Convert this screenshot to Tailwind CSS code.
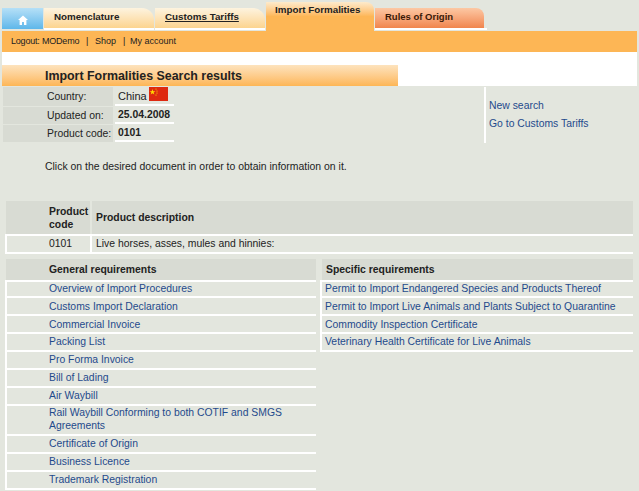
<!DOCTYPE html>
<html lang="en">
<head>
    <meta charset="UTF-8">
    <title>Import Formalities Search results</title>
    <script src="https://cdn.jsdelivr.net/npm/@tailwindcss/browser@4"></script>
</head>
<body class="bg-[#e3e6de] font-['Liberation_Sans',Arial,sans-serif] text-[10.4px] text-[#222] h-[491px] w-[639px] overflow-hidden">
    <!-- tabs -->
    <div class="flex items-end h-[31px] pl-[2px] gap-[1px]">
        <div class="w-[41px] h-[21px] mb-[2px] flex items-center justify-center bg-gradient-to-b from-[#b5e0f7] to-[#5db7ea]">
            <svg width="10" height="10" viewBox="0 0 10 10" class="mt-[2px]"><path d="M5 0.5 L10 5 H8.4 V10 H6 V7 H4 V10 H1.6 V5 H0 Z" fill="#fff"/></svg>
        </div>
        <div class="w-[110px] h-[22px] mb-[1px] pl-[10px] pt-[2px] text-[9.8px] font-bold bg-gradient-to-b from-[#fdf3df] to-[#fcd48f] rounded-tr-[12px] border-b-2 border-white">Nomenclature</div>
        <div class="w-[110px] h-[22px] mb-[1px] pl-[10px] pt-[2px] text-[9.8px] font-bold underline bg-gradient-to-b from-[#fdf3df] to-[#fcd48f] rounded-tr-[12px] border-b-2 border-white">Customs Tariffs</div>
        <div class="w-[108px] h-[29px] pl-[9px] pt-[1px] text-[9.8px] font-bold bg-gradient-to-b from-[#fdeacb] to-[#fdb655] to-50% rounded-tr-[8px]">Import Formalities</div>
        <div class="w-[112px] h-[22px] mb-[1px] border-b-2 border-white">
            <div class="w-[109px] h-full pl-[10px] pt-[2px] text-[9.5px] font-bold text-[#3a1a08] bg-gradient-to-b from-[#fcc8a4] to-[#f0844c] rounded-tr-[8px]">Rules of Origin</div>
        </div>
    </div>
    <div class="ml-[2px] w-[635px] h-[21px] bg-[#fdb655] flex items-center pl-[9px] text-[9px]">
        <span class="w-[75px] tracking-[-0.2px]">Logout: MODemo</span><span class="w-[9px]">|</span><span class="w-[28px]">Shop</span><span class="w-[7px]">|</span><span>My account</span>
    </div>
    <!-- title band -->
    <div class="ml-[2px] w-[635px] h-[34px] bg-white pt-[13px]">
        <div class="w-[396px] h-[21px] pl-[43px] pt-[1px] flex items-center font-bold text-[12.4px] bg-gradient-to-b from-[#fde3bd] to-[#fdb655]">Import Formalities Search results</div>
    </div>
    <!-- info -->
    <div class="flex h-[56px] mt-[1px] ml-[3px]">
        <div class="w-[481px] flex flex-col">
            <div class="flex h-[19px]">
                <div class="w-[110px] bg-[#d8dbd3] pl-[44px] flex items-center">Country:</div>
                <div class="w-[59px] ml-[2px] pl-[3px] pt-[2px] flex items-center gap-[2px] border-b-2 border-white text-[11px]">China
                    <svg width="19" height="14" viewBox="0 0 19 14" class="-mt-[5px]"><rect width="19" height="14" fill="#de2910"/><path d="M3.5 2 L4.2 4.2 L6.4 4.2 L4.6 5.5 L5.3 7.6 L3.5 6.3 L1.7 7.6 L2.4 5.5 L0.6 4.2 L2.8 4.2 Z" fill="#ffde00"/><circle cx="7" cy="2" r=".6" fill="#ffde00"/><circle cx="8" cy="4" r=".6" fill="#ffde00"/><circle cx="8" cy="6" r=".6" fill="#ffde00"/><circle cx="7" cy="8" r=".6" fill="#ffde00"/></svg>
                </div>
            </div>
            <div class="flex h-[18px]">
                <div class="w-[110px] bg-[#d8dbd3] border-t border-[#e3e6de] pl-[44px] flex items-center">Updated on:</div>
                <div class="w-[59px] ml-[2px] pl-[3px] pt-[2px] flex items-center font-bold border-b-2 border-white">25.04.2008</div>
            </div>
            <div class="flex h-[18px]">
                <div class="w-[110px] bg-[#d8dbd3] border-t border-[#e3e6de] pl-[44px] flex items-center">Product code:</div>
                <div class="w-[59px] ml-[2px] pl-[3px] pt-[2px] flex items-center font-bold border-b-2 border-white">0101</div>
            </div>
        </div>
        <div class="border-l-2 border-white pl-[3px] pt-[10px] text-[#1f4a8c] leading-[18px]">
            <div>New search</div>
            <div>Go to Customs Tariffs</div>
        </div>
    </div>
    <p class="ml-[45px] mt-[17px] h-[13px] leading-[13px] text-[10.45px]">Click on the desired document in order to obtain information on it.</p>
    <!-- product table -->
    <div class="ml-[5px] mt-[28px] w-[628px]">
        <div class="flex h-[33px] ml-[1px] bg-[#d8dbd3] font-bold">
            <div class="w-[86px] pl-[43px] flex items-center leading-[13px] border-r-2 border-[#e3e6de]">Product code</div>
            <div class="pl-[4px] flex items-center">Product description</div>
        </div>
        <div class="flex h-[20px] border-y-2 border-white border-l-2">
            <div class="w-[85px] pl-[42px] flex items-center border-r-2 border-white">0101</div>
            <div class="pl-[4px] flex items-center">Live horses, asses, mules and hinnies:</div>
        </div>
    </div>
    <!-- requirements -->
    <div class="grid grid-cols-[311px_313px] ml-[5px] mt-[5px] gap-[4px] w-[628px]">
        <div>
            <div class="ml-[1px] h-[21px] bg-[#d8dbd3] font-bold pl-[43px] flex items-center">General requirements</div>
            <div class="text-[#1f4a8c] border-l-2 border-white">
                <div class="h-[18px] pl-[42px] flex items-center border-y-2 border-white">Overview of Import Procedures</div>
                <div class="h-[18px] pl-[42px] pt-[1px] flex items-center border-b-2 border-white">Customs Import Declaration</div>
                <div class="h-[18px] pl-[42px] pt-[1px] flex items-center border-b-2 border-white">Commercial Invoice</div>
                <div class="h-[18px] pl-[42px] flex items-center border-b-2 border-white">Packing List</div>
                <div class="h-[18px] pl-[42px] flex items-center border-b-2 border-white">Pro Forma Invoice</div>
                <div class="h-[18px] pl-[42px] flex items-center border-b-2 border-white">Bill of Lading</div>
                <div class="h-[18px] pl-[42px] flex items-center border-b-2 border-white">Air Waybill</div>
                <div class="h-[30px] pl-[42px] pr-[20px] pb-[2px] flex items-center leading-[13px] border-b-2 border-white">Rail Waybill Conforming to both COTIF and SMGS Agreements</div>
                <div class="h-[18px] pl-[42px] flex items-center border-b-2 border-white">Certificate of Origin</div>
                <div class="h-[18px] pl-[42px] flex items-center border-b-2 border-white">Business Licence</div>
                <div class="h-[18px] pl-[42px] flex items-center border-b-2 border-white">Trademark Registration</div>
            </div>
        </div>
        <div>
            <div class="ml-[2px] h-[21px] bg-[#d8dbd3] font-bold pl-[4px] flex items-center">Specific requirements</div>
            <div class="text-[#1f4a8c] border-l-2 border-white">
                <div class="h-[18px] pl-[3px] flex items-center border-y-2 border-white">Permit to Import Endangered Species and Products Thereof</div>
                <div class="h-[18px] pl-[3px] pt-[1px] flex items-center border-b-2 border-white">Permit to Import Live Animals and Plants Subject to Quarantine</div>
                <div class="h-[18px] pl-[3px] pt-[1px] flex items-center border-b-2 border-white">Commodity Inspection Certificate</div>
                <div class="h-[18px] pl-[3px] flex items-center border-b-2 border-white">Veterinary Health Certificate for Live Animals</div>
            </div>
        </div>
    </div>
</body>
</html>
